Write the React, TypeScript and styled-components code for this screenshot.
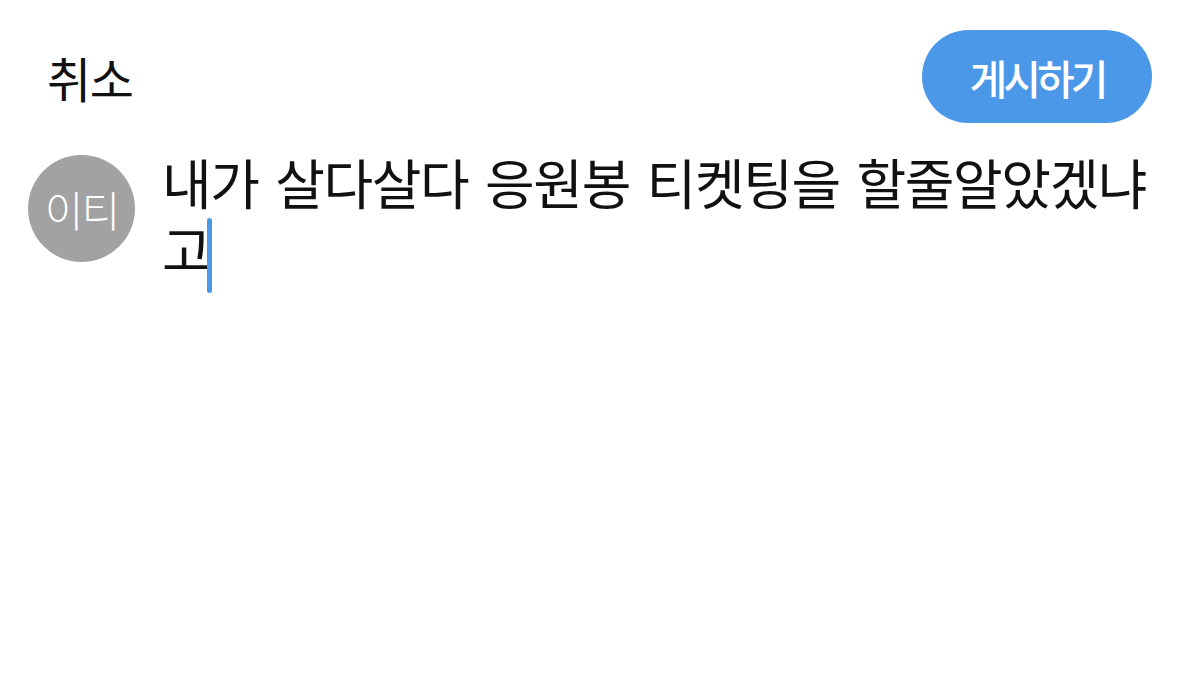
import React from "react";
import styled, { createGlobalStyle } from "styled-components";

const GlobalStyle = createGlobalStyle`
	html, body {
		margin: 0;
		padding: 0;
		background: #ffffff;
	}
	body {
		font-family: "Noto Sans CJK KR", "Noto Sans", sans-serif;
		color: #111111;
	}
`;

const App = () => {
	return (
		<>
			<GlobalStyle />
			<Screen>
				<TopBar>
					<CancelButton>취소</CancelButton>
					<PostButton>게시하기</PostButton>
				</TopBar>
				<Composer>
					<Avatar>이티</Avatar>
					<Draft>
						내가 살다살다 응원봉 티켓팅을 할줄알았겠냐
						<LastWord>
							고
							<Caret />
						</LastWord>
					</Draft>
				</Composer>
			</Screen>
		</>
	);
};

export default App;

const Screen = styled.div`
	width: 1200px;
	height: 680px;
	background: #ffffff;
	overflow: hidden;
	display: flex;
	flex-direction: column;
`;

const TopBar = styled.header`
	display: flex;
	align-items: center;
	justify-content: space-between;
	padding: 30px 48px 0px 47px;
	height: 93px;
`;

const CancelButton = styled.span`
	font-size: 48px;
	letter-spacing: -1.5px;
	color: #111111;
`;

const PostButton = styled.span`
	display: flex;
	align-items: center;
	justify-content: center;
	width: 230px;
	height: 93px;
	border-radius: 47px;
	background: #4a98e7;
	color: #ffffff;
	font-size: 41px;
	font-weight: 500;
	letter-spacing: -4px;
`;

const Composer = styled.section`
	display: flex;
	align-items: flex-start;
	gap: 27px;
	padding: 25px 0px 0px 28px;
`;

const Avatar = styled.div`
	flex-shrink: 0;
	width: 107px;
	height: 107px;
	margin-top: 7px;
	border-radius: 50%;
	background: #a2a2a2;
	color: #ffffff;
	font-size: 42px;
	font-weight: 300;
	letter-spacing: -2px;
	display: flex;
	align-items: center;
	justify-content: center;
`;

const Draft = styled.div`
	width: 1010px;
	font-size: 54px;
	line-height: 67px;
	letter-spacing: -1.4px;
	word-spacing: 6px;
	word-break: break-all;
	color: #111111;
`;

const LastWord = styled.span`
	white-space: nowrap;
`;

const Caret = styled.span`
	display: inline-block;
	width: 5px;
	height: 75px;
	margin: 3px 0px 0px -3px;
	vertical-align: top;
	border-radius: 3px;
	background: #4a98e7;
`;
